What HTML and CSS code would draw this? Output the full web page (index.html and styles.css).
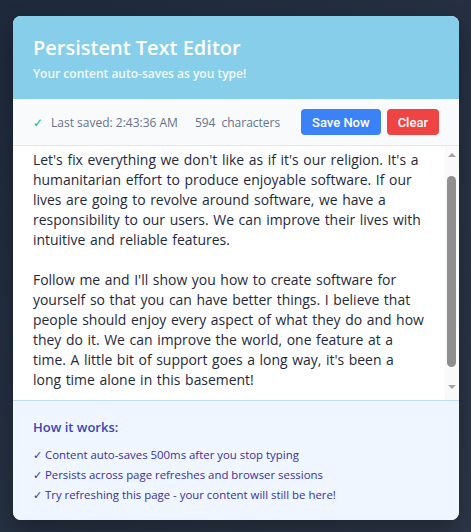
FILE: index.html
```html
<!DOCTYPE html>
<html lang="en">
<head>
<meta charset="utf-8">
<title>Persistent Text Editor</title>
<link rel="stylesheet" href="styles.css">
</head>
<body>
<div class="card">
  <header class="header">
    <h1 class="title">Persistent Text Editor</h1>
    <p class="subtitle">Your content auto-saves as you type!</p>
  </header>
  <div class="toolbar">
    <div class="status">
      <span class="saved"><span class="check">✓</span>Last saved: 2:43:36 AM</span>
      <span class="count"><span class="num">594</span><span class="unit">characters</span></span>
    </div>
    <div class="actions">
      <button class="btn btn-save">Save Now</button>
      <button class="btn btn-clear">Clear</button>
    </div>
  </div>
  <div class="editor-wrap">
    <textarea class="editor">Let's fix everything we don't like as if it's our religion. It's a humanitarian effort to produce enjoyable software. If our lives are going to revolve around software, we have a responsibility to our users. We can improve their lives with intuitive and reliable features.

Follow me and I'll show you how to create software for yourself so that you can have better things. I believe that people should enjoy every aspect of what they do and how they do it. We can improve the world, one feature at a time. A little bit of support goes a long way, it's been a long time alone in this basement!</textarea>
    <div class="scrollbar" aria-hidden="true">
      <span class="arrow arrow-up"></span>
      <span class="thumb"></span>
      <span class="arrow arrow-down"></span>
    </div>
  </div>
  <section class="info">
    <h2 class="info-title">How it works:</h2>
    <ul class="info-list">
      <li>✓ Content auto-saves 500ms after you stop typing</li>
      <li>✓ Persists across page refreshes and browser sessions</li>
      <li>✓ Try refreshing this page - your content will still be here!</li>
    </ul>
  </section>
</div>
</body>
</html>
```
FILE: styles.css
```css
html, body {
  margin: 0;
  padding: 0;
}
body {
  min-height: 532px;
  background: linear-gradient(135deg, #1e293b 0%, #2d3748 100%);
  font-family: "Open Sans", "Noto Sans", sans-serif;
  padding: 16px 12px 13px 13px;
  box-sizing: border-box;
}
.card {
  width: 446px;
  background: #ffffff;
  border-radius: 8px;
  overflow: hidden;
  display: flex;
  flex-direction: column;
  box-shadow: 0 10px 25px rgba(0, 0, 0, 0.3);
}
.header {
  background: #87ceeb;
  padding: 20px 20px 16px;
  color: #ffffff;
}
.title {
  margin: 0;
  font-size: 20px;
  line-height: 24px;
  font-weight: 600;
}
.subtitle {
  margin: 5px 0 0;
  font-size: 12px;
  line-height: 18px;
  font-weight: 600;
  opacity: 0.9;
}
.toolbar {
  background: #f8fafc;
  border-bottom: 1px solid #e2e8f0;
  padding: 10px 20px;
  display: flex;
  align-items: center;
  justify-content: space-between;
}
.status {
  display: flex;
  gap: 17px;
  font-size: 12px;
  color: #64748b;
}
.check {
  color: #10b981;
  margin-right: 8px;
}
.unit {
  margin-left: 6px;
}
.actions {
  display: flex;
  gap: 6px;
}
.btn {
  height: 26px;
  padding: 0 11px;
  border: none;
  border-radius: 4px;
  color: #ffffff;
  font-family: Roboto, "Liberation Sans", sans-serif;
  font-size: 13px;
  font-weight: 500;
}
.btn-save {
  background: #3b82f6;
}
.btn-clear {
  background: #ef4444;
}
.editor-wrap {
  position: relative;
  height: 254px;
}
.editor {
  display: block;
  width: 100%;
  height: 100%;
  box-sizing: border-box;
  border: none;
  outline: none;
  resize: none;
  margin: 0;
  padding: 4px 34.5px 10px 20px;
  overflow: hidden;
  font-family: "Open Sans", "Noto Sans", sans-serif;
  font-size: 13.95px;
  word-spacing: 1px;
  line-height: 20px;
  color: #1e293b;
  background: #ffffff;
}
.scrollbar {
  position: absolute;
  top: 0;
  right: 0;
  bottom: 0;
  width: 14px;
  background: #f9f9f9;
}
.arrow {
  position: absolute;
  left: 3px;
  width: 0;
  height: 0;
  border-left: 4px solid transparent;
  border-right: 4px solid transparent;
}
.arrow-up {
  top: 7px;
  border-bottom: 4px solid #a3a3a3;
}
.arrow-down {
  bottom: 11px;
  border-top: 4px solid #a3a3a3;
}
.thumb {
  position: absolute;
  top: 30px;
  left: 2px;
  width: 9px;
  height: 191px;
  border-radius: 5px;
  background: #8f8f8f;
}
.info {
  background: #eff6ff;
  border-top: 1px solid #bfdbfe;
  padding: 18px 20px 15px;
}
.info-title {
  margin: 0 0 10px;
  font-size: 13px;
  line-height: 16px;
  font-weight: 600;
  color: #3b46b4;
}
.info-list {
  list-style: none;
  margin: 0;
  padding: 0;
  font-size: 11.4px;
  line-height: 20px;
  color: #3730a3;
}
```
